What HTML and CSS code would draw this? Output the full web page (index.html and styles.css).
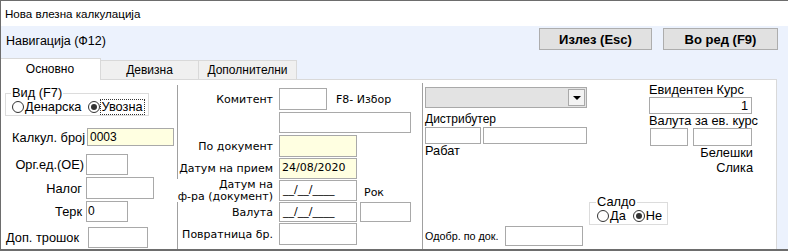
FILE: index.html
```html
<!DOCTYPE html>
<html lang="mk">
<head>
<meta charset="utf-8">
<title>Нова влезна калкулација</title>
<link rel="stylesheet" href="styles.css">
</head>
<body>
<div class="window">
  <div class="titlebar">Нова влезна калкулација</div>
  <div class="nav">
    <div class="nav-top">
      <span class="nav-title">Навигација (Ф12)</span>
      <div class="nav-buttons">
        <button class="btn btn-exit">Излез (Esc)</button>
        <button class="btn btn-ok">Во ред (F9)</button>
      </div>
    </div>
    <div class="tabs">
      <div class="tab active">Основно</div>
      <div class="tab">Девизна</div>
      <div class="tab">Дополнителни</div>
    </div>
    <div class="panel">
      <div class="col col1">
        <fieldset class="group group-vid">
          <legend>Вид (F7)</legend>
          <label class="radio"><span class="dot"></span>Денарска</label>
          <label class="radio checked"><span class="dot"></span><span class="focus">Увозна</span></label>
        </fieldset>
        <div class="row r-kalk"><span class="lbl">Калкул. број</span><span class="inp yellow w-kalk">0003</span></div>
        <div class="row r-org"><span class="lbl">Орг.ед.(ОЕ)</span><span class="inp w-42"></span></div>
        <div class="row r-nalog"><span class="lbl">Налог</span><span class="inp w-68"></span></div>
        <div class="row r-terk"><span class="lbl">Терк</span><span class="inp w-42">0</span></div>
        <div class="row r-dop"><span class="lbl lbl-left">Доп. трошок</span><span class="inp w-60"></span></div>
      </div>
      <div class="col col2">
        <div class="row2 r2-kom"><span class="lbl2">Комитент</span><span class="inp w-48"></span><span class="hint">F8- Избор</span></div>
        <div class="row2 r2-wide"><span class="lbl2"></span><span class="inp w-132"></span></div>
        <div class="row2 r2-podok"><span class="lbl2">По документ</span><span class="inp yellow w-78"></span></div>
        <div class="row2 r2-priem"><span class="lbl2">Датум на прием</span><span class="inp yellow w-78 mono">24/08/2020</span></div>
        <div class="row2 r2-fra"><span class="lbl2 two">Датум на<br>ф-ра (документ)</span><span class="inp w-78 mono">__/__/____</span><span class="rok">Рок</span></div>
        <div class="row2 r2-val"><span class="lbl2">Валута</span><span class="inp w-78 mono">__/__/____</span><span class="inp w-51 ml3"></span></div>
        <div class="row2 r2-povr"><span class="lbl2">Повратница бр.</span><span class="inp w-78"></span></div>
      </div>
      <div class="col col3">
        <div class="combo"><span class="combo-btn"><span class="tri"></span></span></div>
        <div class="txt distr">Дистрибутер</div>
        <div class="pair"><span class="inp w-56 h17"></span><span class="inp w-104 h17"></span></div>
        <div class="txt rabat">Рабат</div>
        <div class="row3 odobr"><span class="txt small">Одобр. по док.</span><span class="inp w-78 h20"></span></div>
      </div>
      <div class="col col4">
        <div class="txt ind">Евидентен Курс</div>
        <span class="inp w-103 h17 ind right">1</span>
        <div class="txt ind vkurs">Валута за ев. курс</div>
        <div class="pair ind2"><span class="inp w-38 h18"></span><span class="inp w-59 h18"></span></div>
        <div class="txt endr">Белешки</div>
        <div class="txt endr slika">Слика</div>
        <fieldset class="group group-saldo">
          <legend>Салдо</legend>
          <label class="radio"><span class="dot"></span>Да</label>
          <label class="radio checked"><span class="dot"></span>Не</label>
        </fieldset>
      </div>
    </div>
  </div>
</div>
</body>
</html>
```

FILE: styles.css
```css
* { box-sizing: border-box; }
html, body { margin: 0; padding: 0; background: #ffffff; }
body { font-family: "Liberation Sans", Arial, sans-serif; font-size: 12px; color: #000; }

.window {
  width: 788px;
  height: 251px;
  border-top: 1px solid #6d6d6d;
  border-left: 1px solid #6d6d6d;
  border-bottom: 2px solid #6d6d6d;
  display: flex;
  flex-direction: column;
  overflow: hidden;
}
.titlebar {
  height: 25px;
  line-height: 25px;
  padding-left: 4px;
  background: #fff;
  font-size: 11.6px;
  flex: none;
}
.nav {
  flex: 1;
  background: #ecf2fd;
  display: flex;
  flex-direction: column;
}
.nav-top {
  height: 32px;
  display: flex;
  justify-content: space-between;
  align-items: flex-start;
  flex: none;
}
.nav-title {
  margin-top: 8px;
  margin-left: 5px;
  line-height: 15px;
  font-size: 12.5px;
}
.nav-buttons { display: flex; gap: 11px; margin-top: 2px; margin-right: 10px; }
.btn {
  height: 22px;
  background: #e1e1e1;
  border: 1px solid #adadad;
  font-family: "Liberation Sans", Arial, sans-serif;
  font-weight: bold;
  font-size: 13px;
  padding: 0;
  color: #000;
}
.btn-exit { width: 113px; }
.btn-ok { width: 115px; }

.tabs { display: flex; align-items: flex-end; height: 21px; flex: none; position: relative; z-index: 1; }
.tab {
  height: 19px;
  width: 99px;
  line-height: 18px;
  text-align: center;
  background: #f0f0f0;
  border: 1px solid #d9d9d9;
  border-bottom: none;
  margin-left: -1px;
}
.tab:first-child { margin-left: 0; }
.tab.active {
  height: 22px;
  width: 100px;
  margin-bottom: -1px;
  background: #fff;
  line-height: 20px;
  border-left: none;
  padding-right: 1px;
}

.panel {
  width: 776px;
  flex: 1;
  background: #fff;
  border-top: 1px solid #d9d9d9;
  border-right: 1px solid #d9d9d9;
  display: flex;
}
.col { display: flex; flex-direction: column; flex: none; }
.col1 { width: 176px; font-size: 12.8px; }
.col2 { width: 245px; border-left: 1px solid #a0a0a0; margin-top: 5px; font-family: "DejaVu Sans", Verdana, sans-serif; font-size: 11px; }
.col3 { width: 167px; border-left: 1px solid #a0a0a0; margin-top: 3px; padding-left: 2px; }
.col4 { flex: 1; font-size: 12.8px; }

.inp {
  display: inline-block;
  height: 100%;
  border: 1px solid #a9a9a9;
  background: #fff;
  padding-left: 1px;
  line-height: 16px;
  white-space: nowrap;
  overflow: hidden;
}
.inp.yellow { background: #ffffe1; }
.inp.right { text-align: right; padding-right: 3px; }
.h17 { height: 17px; }
.h18 { height: 18px; }
.h20 { height: 20px; }
.w-kalk { width: 87px; }
.w-38 { width: 38px; }
.w-42 { width: 42px; }
.w-48 { width: 48px; }
.w-51 { width: 51px; }
.w-56 { width: 56px; }
.w-59 { width: 59px; }
.w-60 { width: 60px; }
.w-68 { width: 68px; }
.w-78 { width: 78px; }
.w-103 { width: 103px; }
.w-104 { width: 104px; }
.w-132 { width: 132px; }
.ml3 { margin-left: 3px; }

/* group boxes & radios */
.group {
  margin: 0;
  border: 1px solid #dcdcdc;
  display: flex;
  align-items: center;
  gap: 0;
}
.group legend { padding: 0 1px; line-height: 12px; margin-left: -1px; }
.radio { display: inline-flex; align-items: center; white-space: nowrap; }
.dot {
  width: 12px;
  height: 12px;
  border: 1px solid #333;
  border-radius: 50%;
  background: #fff;
  margin-right: 1px;
  position: relative;
  flex: none;
}
.radio.checked .dot::after {
  content: "";
  position: absolute;
  left: 2px; top: 2px;
  width: 6px; height: 6px;
  border-radius: 50%;
  background: #333;
}
.group-vid {
  margin: 7px 0 0 4px;
  width: 144px;
  height: 29px;
  padding: 0 0 0 6px;
}
.group-vid .radio + .radio { margin-left: 7px; }
.focus { outline: 1px dotted #333; outline-offset: 0; padding: 0 1px 1px 0; line-height: 13px; }

/* column 1 rows */
.row { display: flex; align-items: center; }
.row .lbl { text-align: right; flex: none; white-space: nowrap; }
.r-kalk { height: 18px; margin-top: 12px; }
.r-kalk .lbl { width: 84px; }
.r-kalk .inp { margin-left: 2px; padding-left: 2px; font-size: 12px; }
.r-org { height: 21px; margin-top: 8px; }
.r-org .lbl { width: 83px; }
.r-org .inp { margin-left: 2px; }
.r-nalog { height: 22px; margin-top: 2px; }
.r-nalog .lbl { width: 81px; }
.r-nalog .inp { margin-left: 4px; }
.r-terk { height: 21px; margin-top: 2px; }
.r-terk .lbl { width: 81px; }
.r-terk .inp { margin-left: 4px; line-height: 18px; font-size: 12px; }
.r-dop { height: 21px; margin-top: 5px; }
.r-dop .lbl-left { width: 87px; text-align: left; padding-left: 5px; }

/* column 2 rows */
.row2 { display: flex; align-items: center; margin-top: 1px; }
.lbl2 { width: 95px; text-align: right; flex: none; margin-right: 6px; white-space: nowrap; }
.lbl2.two { line-height: 11.5px; width: 101px; margin-left: -6px; position: relative; background: #fff; }
.mono { line-height: 18px; padding-left: 3px; }
.r2-kom { height: 22px; margin-top: 3px; }
.hint { margin-left: 9px; }
.r2-wide { height: 21px; margin-top: 2px; }
.r2-podok { height: 22px; margin-top: 2px; }
.r2-priem { height: 21px; }
.r2-priem .inp { line-height: 17px; padding-left: 2px; }
.r2-fra { height: 21px; }
.rok { margin-left: 7px; align-self: flex-end; margin-bottom: 2px; }
.r2-val { height: 20px; }
.r2-povr { height: 22px; }

/* column 3 */
.combo {
  margin-top: 4px;
  width: 162px;
  height: 21px;
  border: 1px solid #a9a9a9;
  background: #e3e3e3;
  display: flex;
  justify-content: flex-end;
  align-items: center;
  padding-right: 1px;
  flex: none;
}
.combo-btn {
  width: 17px;
  height: 17px;
  border: 1px solid #a9a9a9;
  background: #f3f3f3;
  display: flex;
  align-items: center;
  justify-content: center;
}
.tri {
  width: 0; height: 0;
  border-left: 4px solid transparent;
  border-right: 4px solid transparent;
  border-top: 4px solid #000;
  margin-top: 1px;
}
.txt { line-height: 14px; white-space: nowrap; }
.distr { margin-top: 4px; }
.rabat { font-size: 12.8px; }
.pair { display: flex; gap: 2px; margin-top: 1px; flex: none; }
.row3 { display: flex; align-items: center; margin-top: auto; margin-bottom: 3px; }
.small { font-size: 10.8px; }
.odobr .inp { margin-left: 6px; }

/* column 4 */
.col4 { padding-top: 3px; align-items: flex-start; }
.ind { margin-left: 60px; }
.vkurs { margin-top: 0; line-height: 13px; }
.ind2 { margin-left: 61px; gap: 5px; margin-top: 1px; }
.endr { align-self: stretch; text-align: right; padding-right: 23px; }
.endr:first-of-type { margin-top: -1px; }
.slika { margin-top: 1px; }
.group-saldo {
  margin: 21px 0 0 0;
  width: 79px;
  height: 29px;
  padding: 0 0 0 7px;
}
.group-saldo .radio + .radio { margin-left: 7px; }
```
